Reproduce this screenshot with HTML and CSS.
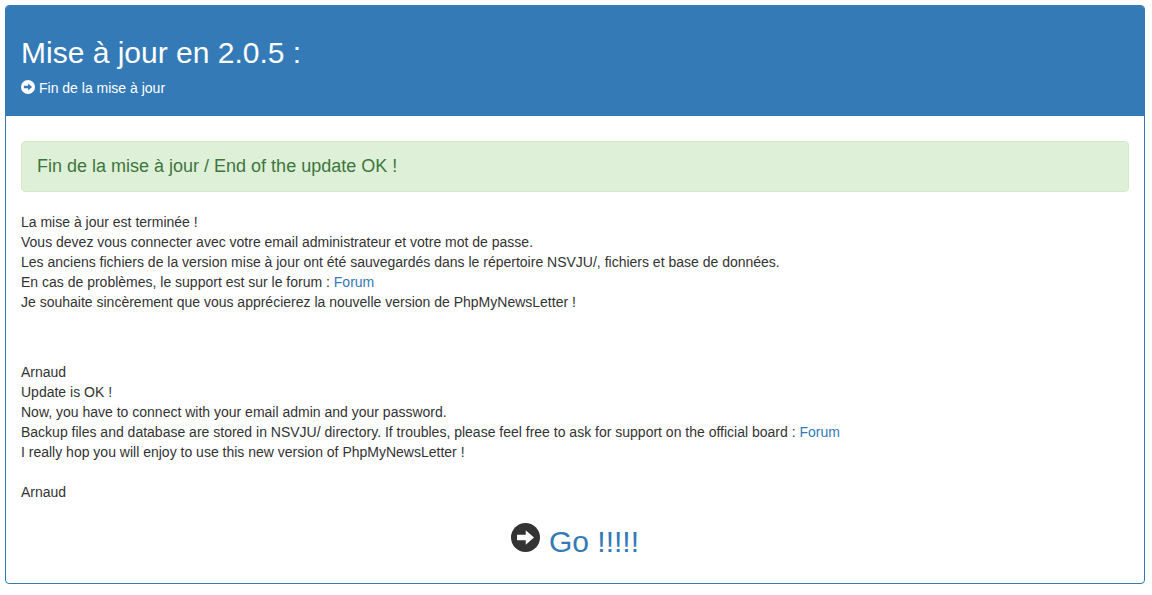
FILE: index.html
```html
<!DOCTYPE html>
<html lang="fr">
<head>
    <meta charset="UTF-8">
    <title>Mise à jour en 2.0.5</title>
    <link rel="stylesheet" href="styles.css">
</head>
<body>
    <div class="panel">
        <div class="panel-heading">
            <h1>Mise à jour en 2.0.5 :</h1>
            <p class="step">
                <svg class="icon-small" viewBox="0 0 24 24"><circle cx="12" cy="12" r="12" fill="#fff"/><path d="M5 9.8h7.2V6l6.8 6-6.8 6v-3.8H5z" fill="#337ab7"/></svg>
                Fin de la mise à jour
            </p>
        </div>
        <div class="panel-body">
            <div class="alert">Fin de la mise à jour / End of the update OK !</div>
            <p class="message">La mise à jour est terminée !<br>
            Vous devez vous connecter avec votre email administrateur et votre mot de passe.<br>
            Les anciens fichiers de la version mise à jour ont été sauvegardés dans le répertoire NSVJU/, fichiers et base de données.<br>
            En cas de problèmes, le support est sur le forum : <a href="#">Forum</a><br>
            Je souhaite sincèrement que vous apprécierez la nouvelle version de PhpMyNewsLetter !<br>
            <br><br></p>
            <p class="message">Arnaud<br>
            Update is OK !<br>
            Now, you have to connect with your email admin and your password.<br>
            Backup files and database are stored in NSVJU/ directory. If troubles, please feel free to ask for support on the official board : <a href="#">Forum</a><br>
            I really hop you will enjoy to use this new version of PhpMyNewsLetter !<br>
            <br>
            Arnaud</p>
            <div class="go">
                <svg class="icon-go" viewBox="0 0 24 24"><circle cx="12" cy="12" r="12" fill="#333"/><path d="M5 9.8h7.2V6l6.8 6-6.8 6v-3.8H5z" fill="#fff"/></svg>
                <a href="#">Go !!!!!</a>
            </div>
        </div>
    </div>
</body>
</html>
```

FILE: styles.css
```css
* { box-sizing: border-box; }
body { margin: 0; padding: 5px 7px 5px 5px; background: #fff; font-family: "Liberation Sans", Arial, sans-serif; font-size: 14px; line-height: 20px; color: #333; }
a { color: #337ab7; text-decoration: none; }
.panel { border: 1px solid #337ab7; border-radius: 4px; height: 579px; overflow: hidden; }
.panel-heading { background: #337ab7; color: #fff; padding: 15px; height: 110px; }
.panel-heading h1 { margin: 15px 0 9px; font-size: 30px; font-weight: 500; line-height: 33px; }
.step { margin: 0; display: flex; align-items: center; gap: 4px; }
.icon-small { width: 14px; height: 14px; margin-top: -2px; }
.panel-body { padding: 25px 15px 15px; }
.alert { background: #dff0d8; border: 1px solid #d6e9c6; border-radius: 4px; color: #3c763d; font-size: 18px; line-height: 20px; padding: 14px 15px 15px; height: 51px; margin-bottom: 20px; }
.message { margin: 0 0 10px; }
.go { display: flex; justify-content: center; align-items: center; gap: 9px; margin-top: 23px; font-size: 30px; line-height: 33px; }
.icon-go { width: 29px; height: 29px; margin-top: -9px; }
```
